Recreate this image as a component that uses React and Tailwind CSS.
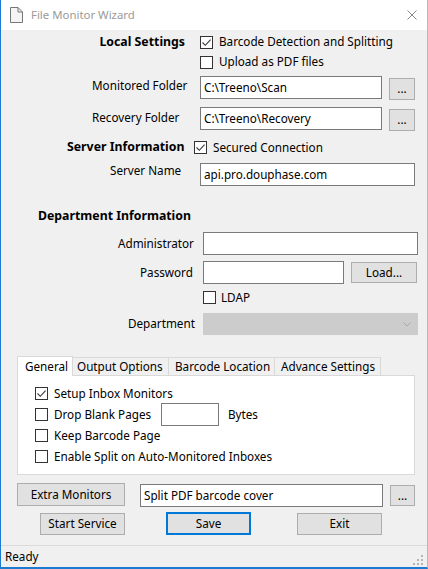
import React from "react";

function Cb({ checked }) {
  return (
    <span className="w-[13px] h-[13px] border border-[#333333] bg-white flex items-center justify-center shrink-0">
      {checked && (
        <svg width="11" height="11" viewBox="0 0 11 11">
          <path d="M1.5 5.5 L4.3 8.3 L9.6 2.6" fill="none" stroke="#3a3a3a" strokeWidth="1.1" />
        </svg>
      )}
    </span>
  );
}

function Input({ w, h = "h-[23px]", children }) {
  return (
    <div className={`${w} ${h} border border-[#7a7a7a] bg-white flex items-center pl-[3px] shrink-0 text-black`}>
      {children}
    </div>
  );
}

function Btn({ cls, children }) {
  return (
    <div className={`${cls} bg-[#e1e1e1] border border-[#adadad] flex items-center justify-center shrink-0 text-black`}>
      {children}
    </div>
  );
}

export default function App() {
  return (
    <div className="w-[428px] h-[569px] bg-white font-['Noto_Sans',sans-serif] text-[11.7px] leading-none text-black overflow-hidden">
      <div className="w-[428px] h-[569px] border-l border-r border-b-2 border-l-[#1c7ad0] border-r-[#b9b9b9] border-b-[#1c7ad0] flex flex-col">
        {/* Title bar */}
        <div className="h-[30px] bg-white flex items-center shrink-0">
          <svg className="ml-[9px]" width="13" height="16" viewBox="0 0 13 16">
            <path d="M0.5 0.5 H8 L12.5 5 V15.5 H0.5 Z" fill="#f4f4f4" stroke="#777" strokeWidth="1" />
            <path d="M8 0.5 V5 H12.5" fill="none" stroke="#777" strokeWidth="1" />
          </svg>
          <span className="ml-[8px] text-[11.4px] text-[#9a9a9a]">File Monitor Wizard</span>
          <svg className="ml-auto mr-[10px]" width="10" height="10" viewBox="0 0 10 10">
            <path d="M0.5 0.5 L9.5 9.5 M9.5 0.5 L0.5 9.5" stroke="#8a8a8a" strokeWidth="1" />
          </svg>
        </div>

        {/* Body */}
        <div className="flex-1 bg-[#f0f0f0] flex flex-col">
          {/* Local settings */}
          <div className="mt-[4px] h-[16px] flex items-center">
            <div className="w-[199px] text-right pr-[15px] font-bold text-[12.3px]">Local Settings</div>
            <Cb checked />
            <span className="ml-[6px]">Barcode Detection and Splitting</span>
          </div>
          <div className="mt-[4px] h-[16px] flex items-center">
            <div className="w-[199px]" />
            <Cb />
            <span className="ml-[6px]">Upload as PDF files</span>
          </div>
          <div className="mt-[6px] h-[24px] flex items-start">
            <div className="w-[199px] pl-[91px] mt-[4px]">Monitored Folder</div>
            <Input w="w-[182px]">C:\Treeno\Scan</Input>
            <Btn cls="ml-[7px] mt-[2px] w-[26px] h-[22px]">...</Btn>
          </div>
          <div className="mt-[7px] h-[24px] flex items-start">
            <div className="w-[199px] pl-[91px] mt-[5px]">Recovery Folder</div>
            <Input w="w-[182px]">C:\Treeno\Recovery</Input>
            <Btn cls="ml-[7px] mt-[2px] w-[26px] h-[22px]">...</Btn>
          </div>
          <div className="mt-[9px] h-[15px] flex items-center">
            <div className="w-[193px] pl-[66px] font-bold text-[12.3px] whitespace-nowrap">Server Information</div>
            <Cb checked />
            <span className="ml-[6px]">Secured Connection</span>
          </div>
          <div className="mt-[8px] h-[23px] flex items-start">
            <div className="w-[199px] pl-[109px] pt-[2px]">Server Name</div>
            <Input w="w-[215px]">api.pro.douphase.com</Input>
          </div>

          {/* Department */}
          <div className="mt-[22px] h-[16px] flex items-center">
            <div className="pl-[37px] font-bold text-[12.3px]">Department Information</div>
          </div>
          <div className="mt-[8px] h-[23px] flex items-center">
            <div className="w-[202px] pl-[117px]">Administrator</div>
            <Input w="w-[215px]" />
          </div>
          <div className="mt-[6px] h-[23px] flex items-center">
            <div className="w-[202px] pl-[139px]">Password</div>
            <Input w="w-[141px]" />
            <Btn cls="ml-[7px] w-[66px] h-[21px]">Load...</Btn>
          </div>
          <div className="mt-[6px] h-[15px] flex items-center">
            <div className="w-[202px]" />
            <Cb />
            <span className="ml-[5px]">LDAP</span>
          </div>
          <div className="mt-[8px] h-[22px] flex items-center">
            <div className="w-[202px] pl-[127px]">Department</div>
            <div className="w-[215px] h-[22px] bg-[#cccccc] border border-[#cccccc] flex items-center justify-end pr-[6px]">
              <svg width="8" height="5" viewBox="0 0 8 5">
                <path d="M0.5 0.5 L4 4 L7.5 0.5" fill="none" stroke="#a8a8a8" strokeWidth="1" />
              </svg>
            </div>
          </div>

          {/* Tabs */}
          <div className="mt-[21px] ml-[16px] w-[398px] flex flex-col">
            <div className="h-[19px] flex items-start">
              <div className="relative z-10 w-[56px] h-[20px] bg-white border-l border-t border-r border-[#d9d9d9] flex items-center pl-[7px]">
                General
              </div>
              <div className="mt-[1px] w-[96px] h-[18px] border-t border-r border-[#d9d9d9] flex items-center pl-[4px]">
                Output Options
              </div>
              <div className="mt-[1px] w-[106px] h-[18px] border-t border-r border-[#d9d9d9] flex items-center pl-[6px]">
                Barcode Location
              </div>
              <div className="mt-[1px] w-[106px] h-[18px] border-t border-r border-[#d9d9d9] flex items-center pl-[6px]">
                Advance Settings
              </div>
            </div>
            <div className="h-[100px] bg-white border border-[#d9d9d9] pt-[7px] pl-[17px] flex flex-col">
              <div className="h-[21px] flex items-center">
                <Cb checked />
                <span className="ml-[6px]">Setup Inbox Monitors</span>
              </div>
              <div className="h-[21px] flex items-center">
                <Cb />
                <span className="ml-[6px] w-[107px]">Drop Blank Pages</span>
                <Input w="w-[58px]" />
                <span className="ml-[9px]">Bytes</span>
              </div>
              <div className="h-[21px] flex items-center">
                <Cb />
                <span className="ml-[6px]">Keep Barcode Page</span>
              </div>
              <div className="h-[21px] flex items-center">
                <Cb />
                <span className="ml-[6px]">Enable Split on Auto-Monitored Inboxes</span>
              </div>
            </div>
          </div>

          {/* Bottom rows */}
          <div className="mt-[8px] h-[23px] flex items-start">
            <Btn cls="ml-[16px] w-[108px] h-[23px]">Extra Monitors</Btn>
            <div className="ml-[15px] mt-[1px]">
              <Input w="w-[243px]">Split PDF barcode cover</Input>
            </div>
            <Btn cls="ml-[7px] mt-[2px] w-[25px] h-[21px]">...</Btn>
          </div>
          <div className="mt-[6px] h-[23px] flex items-start">
            <Btn cls="ml-[39px] mt-[1px] w-[85px] h-[22px]">Start Service</Btn>
            <div className="ml-[41px] w-[85px] h-[23px] bg-[#e1e1e1] border-2 border-[#0078d7] flex items-center justify-center">
              Save
            </div>
            <Btn cls="ml-[46px] mt-[1px] w-[85px] h-[22px]">Exit</Btn>
          </div>

          {/* Status bar */}
          <div className="mt-auto h-[22px] border-t border-[#dadada] flex items-center pl-[4px] relative">
            <span>Ready</span>
            <svg className="absolute right-[3px] bottom-[1px]" width="11" height="11" viewBox="0 0 11 11">
              <rect x="8" y="0" width="2" height="2" fill="#b5b5b5" />
              <rect x="4" y="4" width="2" height="2" fill="#b5b5b5" />
              <rect x="8" y="4" width="2" height="2" fill="#b5b5b5" />
              <rect x="0" y="8" width="2" height="2" fill="#b5b5b5" />
              <rect x="4" y="8" width="2" height="2" fill="#b5b5b5" />
              <rect x="8" y="8" width="2" height="2" fill="#b5b5b5" />
            </svg>
          </div>
        </div>
      </div>
    </div>
  );
}
